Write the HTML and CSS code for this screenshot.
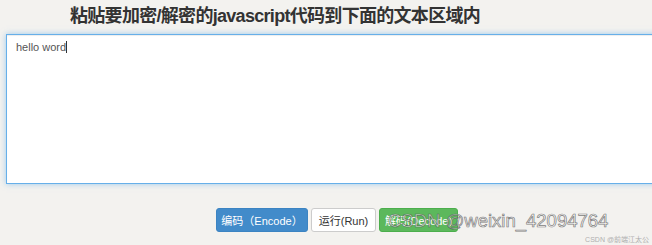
FILE: index.html
```html
<!DOCTYPE html>
<html lang="zh-CN">
<head>
    <meta charset="UTF-8">
    <meta name="viewport" content="width=device-width, initial-scale=1.0">
    <title>JS加密/解密</title>
    <link rel="stylesheet" href="styles.css">
</head>
<body>
    <h2 class="title">粘贴要加密/解密的javascript代码到下面的文本区域内</h2>

    <div class="editor">hello word<span class="caret"></span></div>

    <div class="actions">
        <button class="btn btn-primary">编码（Encode）</button>
        <button class="btn btn-default">运行(Run)</button>
        <button class="btn btn-success">解码(Decode)</button>
    </div>

    <div class="watermark">CSDN @weixin_42094764</div>
    <div class="credit">CSDN @前端江太公</div>
</body>
</html>
```

FILE: styles.css
```css
html, body {
    margin: 0;
    height: 100%;
}

body {
    background-color: #f3f2ef;
    font-family: "Liberation Sans", "Noto Sans CJK SC", sans-serif;
    position: relative;
    overflow: hidden;
}

.title {
    margin: 0;
    padding: 4px 0 0 70px;
    height: 26px;
    font-size: 18px;
    font-weight: bold;
    letter-spacing: -0.7px;
    color: #333;
    line-height: 24px;
    white-space: nowrap;
}

.editor {
    margin: 4px -20px 0 6px;
    height: 140px;
    padding: 4px 9px;
    background: #fff;
    border: 1px solid #66afe9;
    box-shadow: inset 0 1px 1px rgba(0, 0, 0, .075), 0 0 6px rgba(102, 175, 233, .6);
    font-size: 11px;
    color: #555;
    line-height: 16px;
}

.caret {
    display: inline-block;
    width: 1px;
    height: 12px;
    background: #333;
    vertical-align: -2px;
}

.actions {
    display: flex;
    gap: 3px;
    padding: 24px 0 0 216px;
}

.btn {
    height: 24px;
    padding: 0;
    font-family: "Liberation Sans", "Noto Sans CJK SC", sans-serif;
    font-size: 11px;
    white-space: nowrap;
    border-radius: 3px;
    border: 1px solid transparent;
}

.btn-primary {
    width: 92px;
    background: #428bca;
    border-color: #3c84c2;
    color: #fff;
}

.btn-default {
    width: 65px;
    background: #fff;
    border-color: #ccc;
    color: #333;
}

.btn-success {
    width: 79px;
    background: #5cb85c;
    border-color: #4cae4c;
    color: #fff;
}

.watermark {
    position: absolute;
    left: 388px;
    top: 210px;
    font-size: 18.5px;
    color: rgba(255, 255, 255, .55);
    -webkit-text-stroke: 0.7px rgba(80, 80, 80, .75);
    white-space: nowrap;
}

.credit {
    position: absolute;
    right: 3px;
    bottom: 1px;
    font-size: 7px;
    color: #b0b0b0;
}
```
